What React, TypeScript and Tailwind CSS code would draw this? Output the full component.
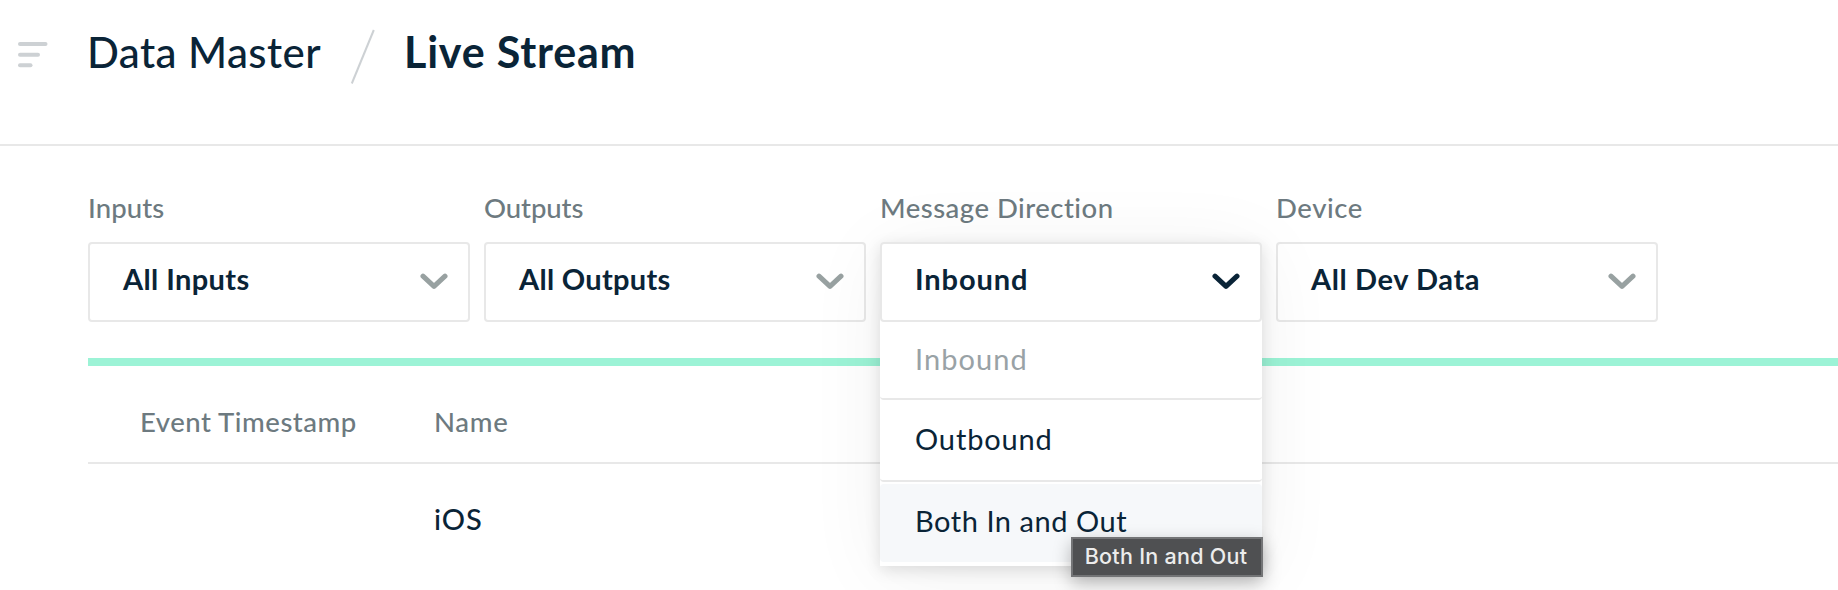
import type { ReactNode } from "react";
import clsx from "clsx";

function Chevron({ className }: { className: string }) {
  return (
    <svg width="28" height="18" viewBox="0 0 28 18" fill="none" className={className}>
      <path d="M3 3.2 L14 13.4 L25 3.2" stroke="currentColor" strokeWidth="5" strokeLinecap="round" strokeLinejoin="round" />
    </svg>
  );
}

type FilterProps = {
  label: string;
  value: string;
  labelSpacing: string;
  valueSpacing: string;
  open?: boolean;
  children?: ReactNode;
};

function Filter({ label, value, labelSpacing, valueSpacing, open, children }: FilterProps) {
  return (
    <div className="w-[382px]">
      <div className={clsx("h-[52px] text-[27.5px] leading-9 font-medium text-[#6d7a80]", labelSpacing)}>{label}</div>
      <div className={clsx("relative h-20", open && "z-10")}>
        <button
          className={clsx(
            "flex h-20 w-full items-center justify-between rounded border-2 border-[#e8e8e8] pr-[20px] pb-[7px] pl-[33px] text-left text-[29px] font-bold text-[#0a2437]",
            valueSpacing,
            open && "relative z-10 bg-white",
          )}
        >
          {value}
          <Chevron className={clsx("mt-[7px]", open ? "text-[#0a2437]" : "text-[#98a1a1]")} />
        </button>
        {children}
      </div>
    </div>
  );
}

export default function App() {
  return (
    <div className="h-[590px] w-full overflow-hidden bg-white font-['Lato','Noto_Sans',sans-serif] text-[#0a2437]">
      <header className="flex h-[146px] border-b-2 border-[#e8e8e8] pt-6 pl-[18px]">
        <svg width="30" height="26" viewBox="0 0 30 26" className="mt-[18px] text-[#cdd1d4]" fill="currentColor">
          <rect x="0" y="0" width="29.5" height="4" rx="2" />
          <rect x="0" y="10.7" width="22" height="4" rx="2" />
          <rect x="0" y="21.2" width="14.5" height="4" rx="2" />
        </svg>
        <nav className="flex text-[42px] leading-[56px]">
          <span className="ml-[39px] w-[263px] font-medium tracking-[0.42px]">Data Master</span>
          <svg width="26" height="56" viewBox="0 0 26 56" className="mt-[5px]">
            <path d="M1.8 54.5 L23.8 1" stroke="#cdd1d4" strokeWidth="2" />
          </svg>
          <span className="ml-[28px] text-[43px] font-bold tracking-[0.8px]">Live Stream</span>
        </nav>
      </header>

      <main className="pl-[88px]">
        <div className="flex gap-[14px] pt-11">
          <Filter label="Inputs" value="All Inputs" labelSpacing="tracking-[0.1px]" valueSpacing="tracking-[0.4px]" />
          <Filter label="Outputs" value="All Outputs" labelSpacing="tracking-[-0.1px]" valueSpacing="tracking-[0.3px]" />
          <Filter label="Message Direction" value="Inbound" labelSpacing="tracking-[0.48px]" valueSpacing="tracking-[0.9px]" open>
            <div className="absolute top-0 left-0 h-[324px] w-full rounded-t bg-white pt-20 text-[29px] shadow-[0_4px_16px_rgba(0,0,0,0.12),0_8px_80px_rgba(0,0,0,0.06)]">
              <div className="flex h-[78px] items-center rounded-b border-b-2 border-[#e8e8e8] pb-[2px] pl-[35px] tracking-[1.08px] text-[#99a2a6]">Inbound</div>
              <div className="flex h-[82px] items-center rounded-b border-b-2 border-[#e8e8e8] pb-[2px] pl-[35px] tracking-[0.86px]">Outbound</div>
              <div className="mt-[2px] flex h-[78px] items-center rounded bg-[#f6f8fa] pb-[4px] pl-[35px] tracking-[0.54px]">Both In and Out</div>
              <div className="absolute top-[295px] left-[191px] flex h-10 w-[192px] items-center justify-center border-2 border-[#737476] bg-[#4f5052] pr-[2px] pb-px font-['Inter','Roboto',sans-serif] text-[21.5px] font-medium tracking-[0.28px] whitespace-nowrap text-[#ececec] shadow-[0_6px_18px_rgba(0,0,0,0.28)]">
                Both In and Out
              </div>
            </div>
          </Filter>
          <Filter label="Device" value="All Dev Data" labelSpacing="tracking-[0.6px]" valueSpacing="tracking-[0.6px]" />
        </div>

        <div className="mt-9 border-t-8 border-[#9cf3d6]">
          <div className="flex h-[98px] items-center border-b-2 border-[#e8e8e8] pt-[16px] pl-[52px] text-[27.5px] font-medium text-[#6d7a80]">
            <span className="w-[294px] tracking-[0.52px]">Event Timestamp</span>
            <span className="tracking-[0.7px]">Name</span>
          </div>
          <div className="flex pt-[37px] pl-[346px] text-[29px] leading-9 font-medium">
            <span className="tracking-[1px]">iOS</span>
          </div>
        </div>
      </main>
    </div>
  );
}
